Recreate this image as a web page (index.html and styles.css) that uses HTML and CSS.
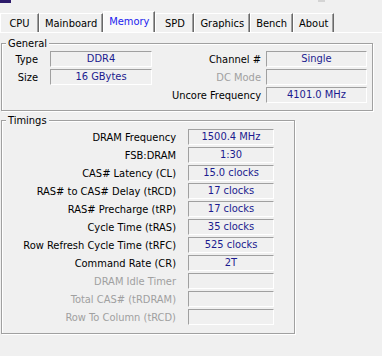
FILE: index.html
```html
<!DOCTYPE html>
<html lang="en">
<head>
  <meta charset="UTF-8">
  <title>CPU-Z - Memory</title>
  <link rel="stylesheet" href="styles.css">
</head>
<body>

  <!-- bit of the window title bar that is left in the shot -->
  <div class="titlebar">
    <span class="title-icon"></span>
    <span class="title-btn"></span>
  </div>

  <!-- Tab strip -->
  <nav class="tabs">
    <div class="tab">CPU</div>
    <div class="tab">Mainboard</div>
    <div class="tab active">Memory</div>
    <div class="tab">SPD</div>
    <div class="tab">Graphics</div>
    <div class="tab">Bench</div>
    <div class="tab">About</div>
  </nav>

  <main class="panel">

    <fieldset class="group general">
      <legend>General</legend>
      <div class="general-grid">
        <span class="lbl">Type</span>
        <div class="field">DDR4</div>
        <span class="lbl lbl-r">Channel #</span>
        <div class="field">Single</div>

        <span class="lbl">Size</span>
        <div class="field">16 GBytes</div>
        <span class="lbl lbl-r off">DC Mode</span>
        <div class="field"></div>

        <span class="lbl lbl-r uncore">Uncore Frequency</span>
        <div class="field">4101.0 MHz</div>
      </div>
    </fieldset>

    <fieldset class="group timings">
      <legend>Timings</legend>
      <div class="timings-grid">
        <span class="lbl">DRAM Frequency</span>
        <div class="field">1500.4 MHz</div>
        <span class="lbl">FSB:DRAM</span>
        <div class="field">1:30</div>
        <span class="lbl">CAS# Latency (CL)</span>
        <div class="field">15.0 clocks</div>
        <span class="lbl">RAS# to CAS# Delay (tRCD)</span>
        <div class="field">17 clocks</div>
        <span class="lbl">RAS# Precharge (tRP)</span>
        <div class="field">17 clocks</div>
        <span class="lbl">Cycle Time (tRAS)</span>
        <div class="field">35 clocks</div>
        <span class="lbl">Row Refresh Cycle Time (tRFC)</span>
        <div class="field">525 clocks</div>
        <span class="lbl">Command Rate (CR)</span>
        <div class="field">2T</div>
        <span class="lbl off">DRAM Idle Timer</span>
        <div class="field"></div>
        <span class="lbl off">Total CAS# (tRDRAM)</span>
        <div class="field"></div>
        <span class="lbl off">Row To Column (tRCD)</span>
        <div class="field"></div>
      </div>
    </fieldset>

  </main>

</body>
</html>
```

FILE: styles.css
```css
/* Basic window look */
body {
  margin: 0;
  width: 382px;
  height: 356px;
  overflow: hidden;
  background: #f0f0f0;
  font-family: "DejaVu Sans Condensed", "Liberation Sans", Arial, sans-serif;
  font-size: 11px;
  color: #000;
}

.titlebar {
  height: 11px;
  display: flex;
  align-items: flex-start;
}

.title-icon {
  width: 11px;
  height: 3px;
  background: #2d1b6b;
}

.title-btn {
  width: 7px;
  height: 2px;
  margin-left: 307px;
  background: #d4d4d4;
}

/* Tabs */
.tabs {
  display: flex;
  align-items: flex-end;
  height: 21px;
}

.tab {
  height: 19px;
  min-width: 39px;
  box-sizing: border-box;
  padding: 1px 5px 0;
  line-height: 17px;
  text-align: center;
  border-top: 1px solid #fff;
  border-left: 1px solid #fff;
  border-right: 1px solid #696969;
  box-shadow: inset -1px 0 #a0a0a0;
  white-space: nowrap;
}

.tab.active {
  height: 21px;
  background: #f9f9f9;
  color: #2222ee;
}

.panel {
  border-top: 1px solid #fff;
  padding-top: 4px;
}

/* Group boxes */
.group {
  margin: 0 0 0 1px;
  padding: 0;
  min-width: 0;
  box-sizing: border-box;
  border: 1px solid #a0a0a0;
  box-shadow: inset 1px 1px #fff, 1px 1px #fff;
}

.group legend {
  margin-left: 4px;
  padding: 0 2px;
  line-height: 13px;
  background: #f0f0f0;
}

.general {
  width: 372px;
}

.timings {
  width: 294px;
  margin-top: 3px;
}

.general-grid {
  display: grid;
  grid-template-columns: 48px 102px 1fr 101px;
  row-gap: 2px;
  padding: 1px 5px 7px 0;
}

.timings-grid {
  display: grid;
  grid-template-columns: 186px 86px;
  row-gap: 2px;
  padding: 2px 20px 8px 0;
}

.lbl {
  align-self: center;
  padding-right: 12px;
  text-align: right;
  white-space: nowrap;
}

.lbl-r {
  padding-right: 5px;
}

.uncore {
  grid-column: 3;
}

.off {
  color: #a0a0a0;
}

/* sunken read-only boxes */
.field {
  height: 16px;
  box-sizing: border-box;
  border: 1px solid;
  border-color: #a0a0a0 #fff #fff #a0a0a0;
  line-height: 14px;
  text-align: center;
  color: #1b1b8f;
  white-space: nowrap;
}
```
